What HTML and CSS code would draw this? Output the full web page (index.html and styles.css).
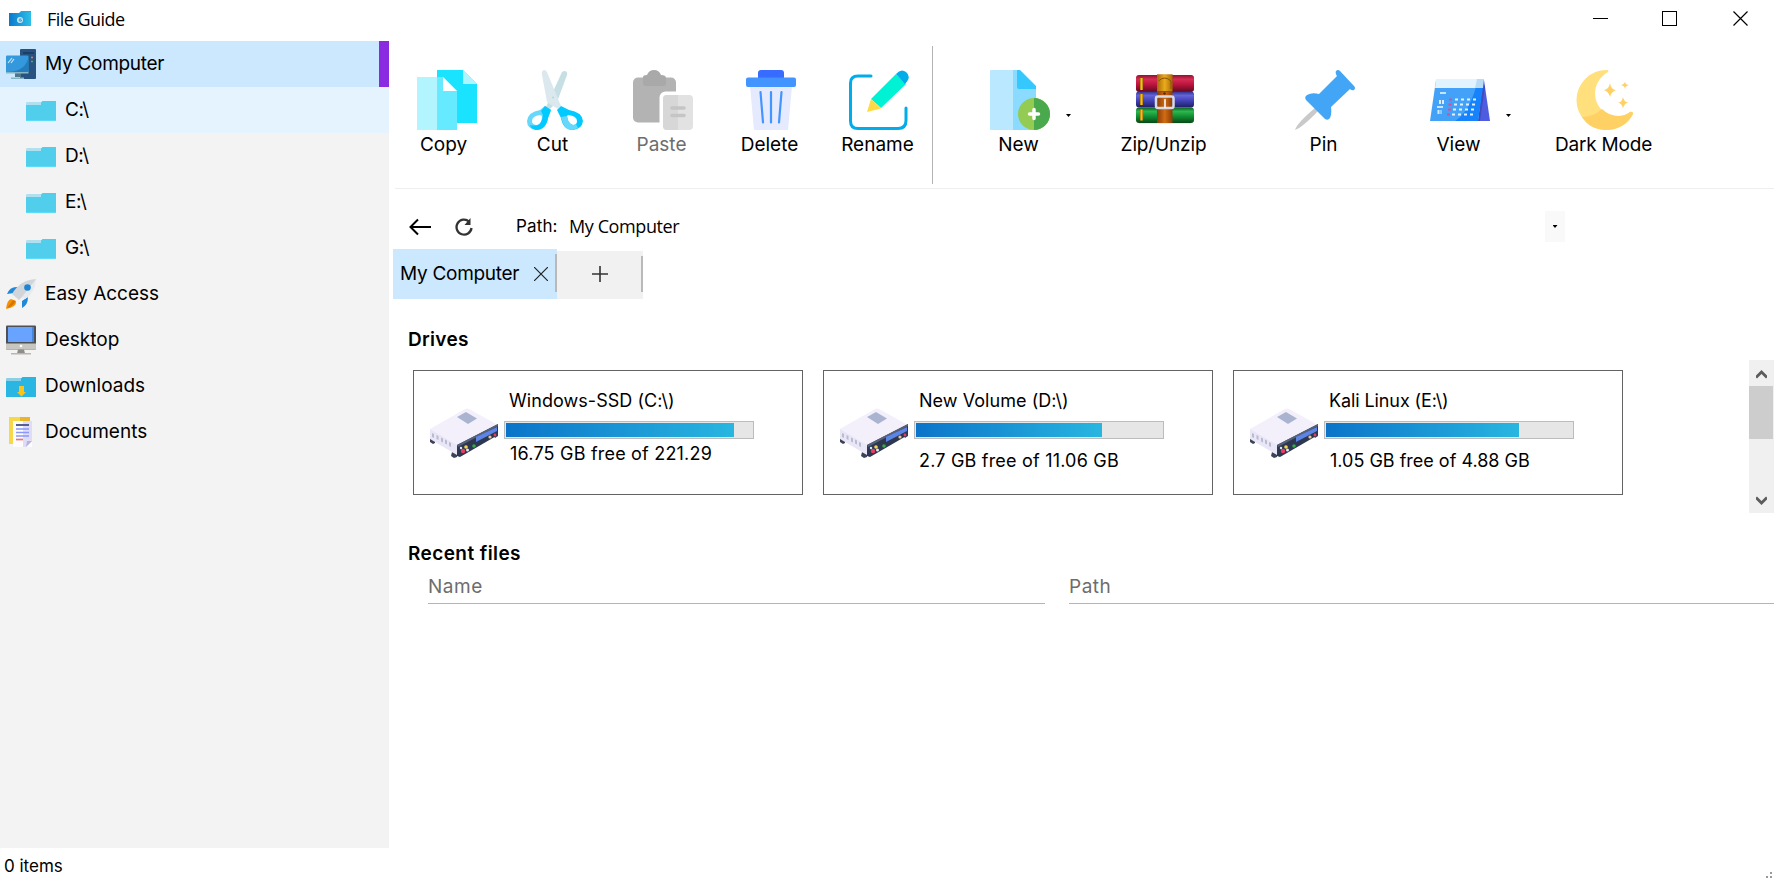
FILE: index.html
```
<!DOCTYPE html>
<html lang="en">
<head>
<meta charset="utf-8">
<title>File Guide</title>
<link rel="stylesheet" href="styles.css">
</head>
<body>
<svg width="0" height="0" class="defs">
  <defs>
    <linearGradient id="gApp" x1="0" x2="1"><stop offset="0" stop-color="#0b78cc"/><stop offset="1" stop-color="#2cc0e8"/></linearGradient>
    <linearGradient id="gRed" x1="0" x2="0" y1="0" y2="1"><stop offset="0" stop-color="#8c1230"/><stop offset=".25" stop-color="#d82c54"/><stop offset=".6" stop-color="#b5123a"/><stop offset="1" stop-color="#5c0a20"/></linearGradient>
    <linearGradient id="gBlue" x1="0" x2="0" y1="0" y2="1"><stop offset="0" stop-color="#30308c"/><stop offset=".25" stop-color="#6464d8"/><stop offset=".6" stop-color="#3f3fb4"/><stop offset="1" stop-color="#1e1e60"/></linearGradient>
    <linearGradient id="gGreen" x1="0" x2="0" y1="0" y2="1"><stop offset="0" stop-color="#0c5c20"/><stop offset=".25" stop-color="#2cb850"/><stop offset=".6" stop-color="#118a30"/><stop offset="1" stop-color="#084816"/></linearGradient>
    <linearGradient id="gBelt" x1="0" x2="1"><stop offset="0" stop-color="#8a3c06"/><stop offset=".5" stop-color="#d06c14"/><stop offset="1" stop-color="#8a3c06"/></linearGradient>
    <linearGradient id="gGold" x1="0" x2="1"><stop offset="0" stop-color="#b07808"/><stop offset=".5" stop-color="#f4c020"/><stop offset="1" stop-color="#b07808"/></linearGradient>
    <symbol id="folder" viewBox="0 0 30 20"><path fill="#b0dff0" d="M0 1.500 1.500 1H16v4H0z"/><path fill="#51ceeb" d="M0 4h15V1.500L16.500 0H30v20H0z"/><path fill="#5cdcf8" d="M0 19h30v1H0z"/></symbol>
    <symbol id="drive" viewBox="0 0 70 50">
      <path fill="#3c4358" d="M1 30l5 2v3l-2 1-3-2zM23 44l5 2v3l-3 1-3-2zM64 27l5-2v3l-3 2z"/>
      <path fill="#f3f0fc" d="M1 21 36 1q2-1 4 0l29 16-41 21-27-14z"/>
      <path fill="#e9e6f8" d="M1 21l27 16v10L1 31z"/>
      <path fill="#b9bccd" d="M3 25l2 1v4l-2-1zM7.500 27l2 1v4l-2-1zM12 29.500l2 1v4l-2-1zM16 31.500l2 1v4l-2-1zM20 34l2 1v4l-2-1z"/>
      <path fill="#2d3850" d="M28 37l41-21v11L31 49l-3-1z"/>
      <path fill="#56617a" d="M28 37 69 16v2L29 39z"/>
      <path fill="#5d85e8" d="M47 29l21-10v4L47 34z"/>
      <path fill="#aab4d0" d="m28 9 9-5 11 6.500-9 5.500z"/>
      <circle cx="34" cy="43" r="2.200" fill="#e83d62"/><circle cx="37" cy="39" r="1.800" fill="#f2d24e"/><circle cx="38.500" cy="42" r="1.500" fill="#e6e8f5"/><circle cx="45" cy="38" r="1.800" fill="#35a84a"/><circle cx="61" cy="29" r="1.600" fill="#e8c79c"/><circle cx="66" cy="27" r="1.400" fill="#e83d62"/><circle cx="32" cy="40" r="1.200" fill="#dfe2f4"/>
    </symbol>
  </defs>
</svg>

<div class="window">
  <header class="titlebar">
    <svg class="app-icon" viewBox="0 0 22 15"><path fill="#2aa6dc" d="M0 2h10l2-2h10v3H0z"/><path fill="url(#gApp)" d="M0 2h12l1-1h9v14H0z"/><circle cx="11" cy="9" r="3" fill="#c9e9f8"/><path d="M12.500 8Q10 7 10 9t2.500 1V9H11" stroke="#2590d0" fill="none" stroke-width=".8"/></svg>
    <span class="title">File Guide</span>
    <div class="controls">
      <svg viewBox="0 0 15 15" shape-rendering="crispEdges"><path d="M0 7.500h15" stroke="#000"/></svg>
      <svg viewBox="0 0 15 15" shape-rendering="crispEdges"><path d="M.5.500h14v14H.5z" fill="none" stroke="#000"/></svg>
      <svg viewBox="0 0 15 15"><path d="M.5.500l14 14M14.500.500l-14 14" stroke="#000" stroke-width="1.200"/></svg>
    </div>
  </header>

  <div class="body">
    <nav class="sidebar">
      <div class="item selected"><svg viewBox="0 0 30 30"><rect x="14" width="16" height="30" rx="1" fill="#28527f"/><path stroke="#183a61" stroke-width="1.500" d="M17 4h11"/><circle cx="26" cy="8.500" r="1" fill="#f27574"/><circle cx="26" cy="12.500" r="1" fill="#46b37a"/><path fill="#52748d" d="M9 24h6v4H9z"/><path fill="#85b6c6" d="M5 28.500h13V30H5zM0 22h22.500v2.500H0z"/><path fill="#3398dc" d="M1 6.500h20.500q1 0 1 1V23H0V7.500q0-1 1-1z"/><path fill="#237cbc" d="M22.500 8v15H2Q20 22 22.500 8z"/><path d="m2 14 4-5M5 14l3-4" stroke="#c7e7fa" stroke-width="1.200"/></svg><span class="tight">My Computer</span></div>
      <div class="item child hover"><svg><use href="#folder"/></svg><span>C:\</span></div>
      <div class="item child"><svg><use href="#folder"/></svg><span>D:\</span></div>
      <div class="item child"><svg><use href="#folder"/></svg><span>E:\</span></div>
      <div class="item child"><svg><use href="#folder"/></svg><span>G:\</span></div>
      <div class="item"><svg viewBox="0 0 30 30"><path fill="#2088d8" d="M1 15q3-8 11-7l-4 6zM22 18q0 8-6 11v-7z"/><path fill="#d1d5da" d="M6 15Q14 1 30 0l-5 10-12 11z"/><path fill="#e6e9ed" d="M30 0q-1 14-11 20l-3-2z"/><circle cx="21.500" cy="8.500" r="3.300" fill="#1e85d5"/><path fill="#f59200" d="M0 30q1-9 5-10l5 2q1 6-10 8z"/><path fill="#d87400" d="M1 29l6-8 2 1q0 4-8 7z"/></svg><span>Easy Access</span></div>
      <div class="item"><svg viewBox="0 0 30 30"><rect width="30" height="24" y=".5" rx="1" fill="#4d5055"/><path fill="#68a4ff" d="M2 2h26v15H2z"/><path fill="#4786df" d="M26 2h2v15h-2z"/><path fill="#c8c6c1" d="M0 18.500h30V23q0 1.500-1 1.500H1q-1 0-1-1.500z"/><circle cx="15" cy="21" r="1.300" fill="#fff"/><path fill="#8e8d88" d="M12 24.500h6l1 4h-8z"/><path fill="#b8b6b0" d="M5 28h20v1.500H5z"/></svg><span>Desktop</span></div>
      <div class="item"><svg class="flat" viewBox="0 0 30 20"><path fill="#8bcfe7" d="M0 1.500 1.500 1H16v4H0z"/><path fill="#29b6e2" d="M0 4h15V1.500L16.500 0H30v20H0z"/><path fill="#fbc31b" d="M13 9h5v6h2l-4.500 4.500L11 15h2z"/></svg><span>Downloads</span></div>
      <div class="item"><svg viewBox="0 0 30 30"><path fill="#f6d94a" d="M3 0h21v27H3z"/><path fill="#e8b62d" d="M14 0h10v4H14z"/><path fill="#fcfcff" d="M7 4h19v26H7z"/><path fill="#dedcf6" d="M17 4h9v20l-6 6h-3z"/><path fill="#b8b2dc" d="m20 30 1-6h5z"/><path d="M10 8h13" stroke="#536091" stroke-width="2"/><path d="M10 12h13M10 15.500h13M10 19h13" stroke="#8a98fa" stroke-width="1.700"/><path d="M10 22.500h7" stroke="#ef7377" stroke-width="1.700"/></svg><span>Documents</span></div>
    </nav>

    <main class="main">
      <div class="toolbar">
        <button class="tool copy"><svg viewBox="0 0 60 60"><path fill="#1ae3ff" d="M20 0h26l14 14v39H20z"/><path fill="#aef5ff" d="M46 0l14 14H46z"/><path fill="#b3f5ff" d="M0 7h20v53H0z"/><path fill="#66eaff" d="M20 7h6l14 14v39H20z"/><path fill="#fff" d="m26 7 14 14H26z"/></svg><span>Copy</span></button>
        <button class="tool cut"><svg viewBox="0 0 60 60"><path fill="#c5dfe4" d="M39 1q4 0 3 4L32 32l-8 8-3-3L37 2z"/><path fill="#dbe9ee" d="M19 0q2 0 3 2l14 34-3 3-5-3-6-4L17 5q-1-4 2-5z"/><path fill="#65d8fb" fill-rule="evenodd" d="M20 36l6 4-3 8q-2 12-12 12Q2 59 2 51q1-9 13-11zm-5 9q-8 1-8 6 0 4 5 4 5-1 5-9z"/><path fill="#00caff" d="M20 36l6 4-3 8q-2 12-12 12-5-1-6-5 4 1 8 0 4-2 5-10l-2-4z"/><path fill="#00caff" fill-rule="evenodd" d="M36 36l-4 4 4 8q2 12 12 12 9-1 10-9-1-9-14-11zm7 9q9 1 9 6 0 4-4 4-5-1-6-9z"/><path fill="#65d8fb" d="M36 47l6-1q1 8 6 9 2 0 3-1l2 4q-13 7-17-11z"/><circle cx="28" cy="27.500" r="1" fill="#b7d4da"/></svg><span>Cut</span></button>
        <button class="tool paste"><svg viewBox="0 0 60 60"><rect y="7.500" width="43" height="45" rx="5" fill="#b3b3b3"/><path fill="#a9a9a9" d="M10 7q0-2 4-2 2-5 7-5t7 5q5 0 5 3v5q0 3-3 3H13q-3 0-3-3z"/><rect x="26.500" y="21.500" width="34" height="41" rx="6" fill="#fff"/><rect x="30" y="25" width="30" height="35" rx="4" fill="#e2e2e2"/><path fill="#d7d7d7" d="M34 25h11v35H34q-4 0-4-4V29q0-4 4-4z"/><path d="M39 38h12M39 45.500h12" stroke="#c5c5c5" stroke-width="3.600" stroke-linecap="round"/></svg><span>Paste</span></button>
        <button class="tool delete"><svg viewBox="0 0 60 60"><path fill="#e5eaff" d="M9 16h42l-4 44H13z"/><path fill="#386bff" d="M17 9V3q0-3 3-3h20q3 0 3 3v6z"/><rect x="5" y="7.500" width="50" height="9.500" rx="2" fill="#4294ff"/><path d="M19.500 22 22 52.500M30 22v30.500M40.500 22 38 52.500" stroke="#4294ff" stroke-width="2.200" stroke-linecap="round"/></svg><span>Delete</span></button>
        <button class="tool rename"><svg viewBox="0 0 60 60"><path d="M22 6H9Q1.500 6 1.500 13v38Q1.500 58.500 9 58.500h40q8 0 8-8V38" fill="none" stroke="#00acea" stroke-width="3" stroke-linecap="round"/><path fill="#00f2d5" d="M47 4 57 14 32 38l-10-9z"/><path fill="#00acea" d="M47 4q5-6 10-2 6 5-1 12z"/><path fill="#ffda45" d="m22 29 10 9.500L18 42z"/></svg><span>Rename</span></button>
        <i class="divider"></i>
        <button class="tool new"><svg viewBox="0 0 60 60"><path fill="#8bdaff" d="M2 0h27l17 18v42H2q-2 0-2-2V2q0-2 2-2z"/><path fill="#bae9ff" d="M2 0h21v60H2q-2 0-2-2V2q0-2 2-2z"/><path fill="#35c8ff" d="M27 0h3l16 16v3H29q-2 0-2-2z"/><circle cx="44" cy="44" r="16" fill="#94cb53"/><path fill="#4ba94d" d="M44 28a16 16 0 0 1 0 32z"/><path d="M44 39.500v9M39.500 44h9" stroke="#fff" stroke-width="3.500" stroke-linecap="round"/></svg><span>New</span></button>
        <i class="caret"></i>
        <button class="tool zip"><svg viewBox="0 0 60 60"><path fill="#d5d9d5" d="M4 51h52v3H4z" opacity=".5"/><rect x="1" y="5" width="58" height="17" rx="3" fill="url(#gRed)"/><rect x="1" y="21.500" width="58" height="16" rx="3" fill="url(#gBlue)"/><rect x="1" y="37.500" width="58" height="15.500" rx="3" fill="url(#gGreen)"/><path fill="url(#gGold)" d="M5 8h3v12H5zM5 24h3v11H5zM5 39.500h3v11H5z"/><path fill="url(#gBelt)" d="M22 4.500h15.500V53H22z"/><path fill="url(#gGold)" d="M22 4.500h15.500V21H22z" opacity=".75"/><path d="M23.500 11q6-6 12.500 0v8M22 21.500h15" fill="none" stroke="#8b5208" stroke-width="1"/><circle cx="29.500" cy="23.500" r="1.300" fill="#5a2b04"/><rect x="21" y="26.500" width="17.500" height="11.500" rx="2" fill="none" stroke="#d8dae4" stroke-width="2.500"/><path d="M30 29v9" stroke="#f1f1f8" stroke-width="1.700"/></svg><span>Zip/Unzip</span></button>
        <button class="tool pin"><svg viewBox="0 0 60 60"><path fill="#c9c9c9" d="m20 38 3 3Q8 57 0 60q2-7 20-22z"/><path fill="#42a5f5" d="M41 1q2-2 4 0l14 15q2 2 0 4-2 1-4-1L36 37q1 7-1 11-2 3-5 1L11 30q-2-3 1-5 5-3 12-1L42 6q-2-3-1-5z"/></svg><span>Pin</span></button>
        <button class="tool view"><svg viewBox="0 0 60 60"><path fill="#4e5de0" d="M53 10h1l6 41H48z"/><path fill="#404bc0" d="m53 12-5 39h2l5-34z"/><path fill="#43a2f8" d="M6 10h47l-5 41H0z"/><path fill="#1682fc" d="M46 17h7l-5 34H25q14-9 21-34z"/><path fill="#e0f3fe" d="M6 9h47l-1 9H5z"/><path fill="#b9dcf4" d="M47 9h7l-1 9h-8z"/><path d="M10 23h6M7 37h6" stroke="#c4e4ff" stroke-width="2"/><path d="M9 32h5M7.500 42h4" stroke="#d6edff" stroke-width="4" stroke-dasharray="2 1"/><path d="M25 29.500h22M24 34.500h22M23 39.500h22M22 44.500h22" stroke="#e0f1ff" stroke-width="2" stroke-dasharray="3 3"/><path d="M19 29.500h3M18.500 34.500h3M18 39.500h3M17 44.500h3" stroke="#d64f95" stroke-width="2.200"/></svg><span>View</span></button>
        <i class="caret"></i>
        <button class="tool dark"><svg viewBox="0 0 60 60"><path fill="#ffe07d" d="M32 0q2 0 1 2C11 15 19 46 43 46q7 0 12-4 3-1 3 2C53 54 43 60 31 60A30 30 0 0 1 32 0z"/><path fill="#ffd064" d="M7 47q11 0 20-8 7 7 17 7 6 0 11-4 3-1 3 2C53 54 43 60 31 60 20 60 12 55 7 47z"/><path fill="#ffd064" d="M35 13q1 7 6 7-5 2-6 7-1-5-6-7 5-1 6-7zM50 11q0 4 4 4-4 1-4 4 0-3-4-4 4-1 4-4zM48 27q1 5 5 5.500-4 1-5 6-1-5-5-6 4 0 5-5.500z"/></svg><span>Dark Mode</span></button>
      </div>

      <div class="pathbar">
        <svg class="back" viewBox="0 0 22 18"><path d="M1.500 9H22M9 1.500 1.500 9 9 16.500" fill="none" stroke="#000" stroke-width="2"/></svg>
        <svg class="reload" viewBox="0 0 18 18"><path d="M14 3.500A7.500 7.500 0 1 0 16.500 10" fill="none" stroke="#333" stroke-width="2.300"/><path fill="#333" d="M15.500 0v7h-6z"/></svg>
        <span class="path-label">Path:</span>
        <span class="path-value">My Computer</span>
        <span class="path-drop"><i class="caret"></i></span>
      </div>

      <div class="tabs">
        <div class="tab active"><span class="tight">My Computer</span><svg viewBox="0 0 14 14"><path d="M0 0l14 14M14 0 0 14" stroke="#222" stroke-width="1.200"/></svg><i></i></div>
        <div class="tab add"><svg viewBox="0 0 16 16"><path d="M0 8h16M8 0v16" stroke="#333" stroke-width="1.600"/></svg><i></i></div>
      </div>

      <h2 class="drives-title">Drives</h2>
      <section class="drives">
        <div class="card first"><svg><use href="#drive"/></svg><div class="info"><span class="name">Windows-SSD (C:\)</span><div class="meter"><b style="width:92.700%"></b></div><span class="free">16.75 GB free of 221.29</span></div></div>
        <div class="card"><svg><use href="#drive"/></svg><div class="info"><span class="name">New Volume (D:\)</span><div class="meter"><b style="width:75.600%"></b></div><span class="free">2.7 GB free of 11.06 GB</span></div></div>
        <div class="card last"><svg><use href="#drive"/></svg><div class="info"><span class="name">Kali Linux (E:\)</span><div class="meter"><b style="width:78.500%"></b></div><span class="free">1.05 GB free of 4.88 GB</span></div></div>
        <div class="scrollbar"><svg viewBox="0 0 11 9"><path d="M0 7.500 5.500 2 11 7.500" fill="none" stroke="#5c5c5c" stroke-width="2.800"/></svg><i></i><svg class="down" viewBox="0 0 11 9"><path d="M0 1.500 5.500 7 11 1.500" fill="none" stroke="#5c5c5c" stroke-width="2.800"/></svg></div>
      </section>

      <h2 class="recent-title">Recent files</h2>
      <div class="columns"><span>Name</span><span>Path</span></div>
    </main>
  </div>

  <footer class="status"><span>0 items</span><svg viewBox="0 0 6 6"><path fill="#999" d="M4 0h2v2H4zM0 4h2v2H0zM4 4h2v2H4z"/></svg></footer>
</div>
</body>
</html>
```

FILE: styles.css
```
* { box-sizing: border-box; }
body { margin: 0; background: #fff; color: #000; font: 19px/24px Inter, "Liberation Sans", sans-serif; }
svg { display: block; flex: none; }
.defs { position: absolute; }
.window { display: flex; flex-direction: column; width: 1774px; height: 880px; overflow: hidden; }

.titlebar { display: flex; height: 41px; flex: none; padding: 11px 26px 0 9px; }
.app-icon { width: 22px; height: 15px; }
.title { margin: -4px 0 0 16px; font: 18px/24px "Open Sans", sans-serif; letter-spacing: -.55px; }
.controls { display: flex; gap: 56px; margin-left: auto; }
.controls svg { width: 15px; height: 15px; }
.controls svg:nth-child(1) { margin-right: -2px; }

.body { display: flex; height: 807px; flex: none; }
.sidebar { width: 389px; flex: none; background: #f3f3f3; }
.item { display: flex; align-items: center; gap: 9px; height: 46px; padding-left: 6px; }
.item svg { width: 30px; height: 30px; }
.tight { letter-spacing: -.28px; }
.item.child { padding-left: 26px; }
.item.child span { letter-spacing: -.4px; }
.item.child svg { height: 20px; margin-top: 2px; }
.item svg.flat { height: 20px; margin-top: 2px; }
.item.selected { background: #cce8ff; border-right: 10px solid #8a2be2; }
.item.hover { background: #e5f3ff; }

.main { display: flex; flex-direction: column; flex: 1; min-width: 0; padding-left: 4px; }
.toolbar { display: flex; height: 148px; flex: none; margin-left: 2px; padding: 29px 0 0 22px; border-bottom: 1px solid #eee; }
.tool { display: flex; flex-direction: column; align-items: center; width: 60px; height: 90px; padding: 0; border: 0; background: none; font: inherit; color: #000; white-space: nowrap; }
.tool svg { width: 60px; height: 60px; }
.tool span { margin: 3px 3px 0 0; }
.copy span { margin-right: 7px; }
.cut span { margin-right: 5px; }
.zip span { letter-spacing: -.15px; }
.dark span { letter-spacing: -.2px; }
.cut, .paste, .delete, .rename { margin-left: 48px; }
.paste span { color: #6d6d6d; }
.divider { width: 1px; height: 138px; margin: -24px 0 0 23px; background: #b4b4b4; }
.new { margin-left: 57px; }
.caret { width: 5px; height: 3px; background: #000; clip-path: polygon(0 0, 100% 0, 50% 100%); flex: none; }
.tool + .caret { margin: 44px 0 0 16px; }
.zip { margin-left: 64px; }
.pin { margin-left: 100px; }
.view { margin-left: 75px; }
.dark { margin-left: 64px; }

.pathbar { display: flex; align-items: center; height: 31px; flex: none; margin-top: 22px; padding-left: 16px; }
.back { width: 22px; height: 18px; margin-top: 1px; }
.reload { width: 18px; height: 18px; margin-left: 24px; }
.path-label { width: 53px; margin: -2px 0 0 43px; font-size: 17px; letter-spacing: .15px; }
.path-value { margin-top: -1px; font: 18px/24px "Open Sans", sans-serif; letter-spacing: -.4px; }
.path-drop { display: flex; align-items: center; justify-content: center; width: 20px; height: 31px; margin: 0 209px 0 auto; background: #f9f9f9; }

.tabs { display: flex; align-items: flex-end; height: 50px; flex: none; margin-top: 7px; }
.tab { display: flex; align-items: center; height: 50px; width: 164px; background: #cce8ff; }
.tab span { width: 133px; padding-left: 7px; margin-right: 8px; white-space: nowrap; }
.tab svg { width: 14px; height: 14px; }
.tab i { width: 2px; height: 38px; margin: -2px 0 0 auto; background: #b9b9b9; }
.tab.add { width: 86px; height: 48px; background: #f1f1f1; }
.tab.add svg { width: 16px; height: 16px; margin: -2px 0 0 35px; }
.tab.add i { height: 36px; margin-top: -2px; }

h2 { margin: 0; font: 600 19px/24px Inter, sans-serif; padding-left: 15px; flex: none; }
.drives-title { margin-top: 29px; letter-spacing: .3px; }
.drives { display: flex; gap: 20px; height: 153px; flex: none; margin-top: 8px; padding: 10px 0 0 20px; }
.card { display: flex; width: 390px; height: 125px; flex: none; border: 1px solid #636363; padding: 17px 0 0 15px; }
.card > svg { width: 70px; height: 50px; margin-top: 20px; }
.info { display: flex; flex-direction: column; margin-left: 5px; }
.name, .free { padding-left: 5px; white-space: nowrap; font-size: 18px; }
.name { margin-top: 1px; letter-spacing: .05px; }
.free { margin-top: 10px; letter-spacing: .2px; }
.first .free { margin-top: 3px; padding-left: 6px; }
.last .free { letter-spacing: 0; padding-left: 6px; }
.last .name { letter-spacing: -.1px; }
.meter { display: flex; width: 250px; height: 18px; margin-top: 8px; padding: 1px; border: 1px solid #bcbcbc; background: #e6e6e6; }
.meter b { height: 14px; background: linear-gradient(90deg, #0b74c9, #28b6e0); }
.scrollbar { display: flex; flex-direction: column; align-items: center; width: 25px; height: 153px; margin: -10px 0 0 auto; padding: 10px 0 8px; background: #f0f0f0; }
.scrollbar svg { width: 11px; height: 9px; }
.scrollbar i { width: 24px; height: 53px; margin: 7px 1px 0 0; background: #cdcdcd; }
.scrollbar .down { margin-top: auto; }

.recent-title { margin-top: 29px; letter-spacing: .42px; }
.columns { display: flex; gap: 24px; padding-left: 35px; margin-top: 8px; color: #6d6d6d; }
.columns span { width: 617px; height: 30px; padding-top: 1px; border-bottom: 1px solid #b4b4b4; letter-spacing: .5px; }
.columns span + span { flex: 1; }

.status { display: flex; align-items: center; justify-content: space-between; height: 32px; padding: 4px 2px 0 4px; font-size: 17px; }
.status svg { width: 6px; height: 6px; margin-top: 17px; }
```
